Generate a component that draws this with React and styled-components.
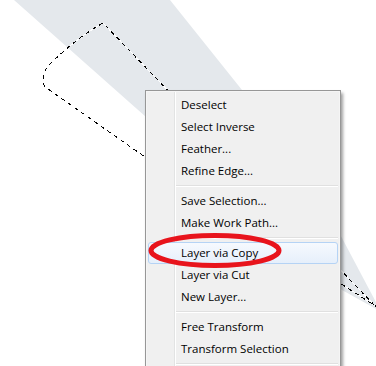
import React from "react";
import styled, { createGlobalStyle } from "styled-components";

const Global = createGlobalStyle`
  html, body { margin: 0; padding: 0; background: #ffffff; }
  body { font-family: "Open Sans", "Noto Sans", sans-serif; }
`;

const Stage = styled.div`
  position: relative;
  width: 376px;
  height: 366px;
  overflow: hidden;
  background: #ffffff;
`;

const Layer = styled.svg`
  position: absolute;
  left: 0;
  top: 0;
  pointer-events: none;
`;

const Menu = styled.div`
  position: absolute;
  left: 145px;
  top: 90px;
  width: 196px;
  box-sizing: border-box;
  border: 1px solid #979797;
  padding: 3px 2px 6px;
  background:
    linear-gradient(
      to right,
      transparent 28px,
      #e2e3e3 28px,
      #e2e3e3 29px,
      #ffffff 29px,
      #ffffff 30px,
      transparent 30px
    ),
    #f0f0f0;
  box-shadow: inset 0 0 0 1px #f5f5f5, 2px 3px 3px rgba(0, 0, 0, 0.38);
`;

const Item = styled.div`
  height: 22px;
  box-sizing: border-box;
  display: flex;
  align-items: center;
  padding: 0 0 2px 32px;
  font-size: 11.5px;
  color: #000000;
  white-space: nowrap;
  border: 1px solid ${(p) => (p.$active ? "#b5d3f5" : "transparent")};
  border-radius: 3px;
  background: ${(p) =>
    p.$active ? "linear-gradient(#f6f9fe, #e6effb)" : "transparent"};
`;

const Separator = styled.div`
  height: 8px;
  margin-left: 28px;
  display: flex;
  align-items: center;
  &::before {
    content: "";
    flex: 1;
    height: 1px;
    background: #e0e0e0;
    border-bottom: 1px solid #ffffff;
  }
`;

const groups = [
  ["Deselect", "Select Inverse", "Feather...", "Refine Edge..."],
  ["Save Selection...", "Make Work Path..."],
  ["Layer via Copy", "Layer via Cut", "New Layer..."],
  ["Free Transform", "Transform Selection"],
];

const selectionPath =
  "M 380 311 L 103 23 Q 76 38 48 66 Q 43 72 43 80 Q 43 87 48 89 L 145 157 L 380 309";

export default function App() {
  return (
    <>
      <Global />
      <Stage>
        <Layer width="376" height="366" viewBox="0 0 376 366">
          <path
            d="M 14 0 L 170 0 L 242 90 L 300 172 L 342 238 L 378 306 L 376 309 L 342 290 L 146 117 Z"
            fill="#e4e8ec"
          />
          <path
            d={selectionPath}
            fill="none"
            stroke="#ffffff"
            strokeWidth="1"
            shapeRendering="crispEdges"
          />
          <path
            d={selectionPath}
            fill="none"
            stroke="#000000"
            strokeWidth="1"
            strokeDasharray="4 4"
            shapeRendering="crispEdges"
          />
        </Layer>
        <Menu>
          {groups.map((g, gi) => (
            <React.Fragment key={gi}>
              {gi > 0 && <Separator />}
              {g.map((label) => (
                <Item key={label} $active={label === "Layer via Copy"}>
                  {label}
                </Item>
              ))}
            </React.Fragment>
          ))}
          <Separator />
        </Menu>
        <Layer width="376" height="366" viewBox="0 0 376 366">
          <ellipse
            cx="215"
            cy="250.5"
            rx="64"
            ry="15"
            fill="none"
            stroke="#e8141c"
            strokeWidth="5"
          />
        </Layer>
      </Stage>
    </>
  );
}
